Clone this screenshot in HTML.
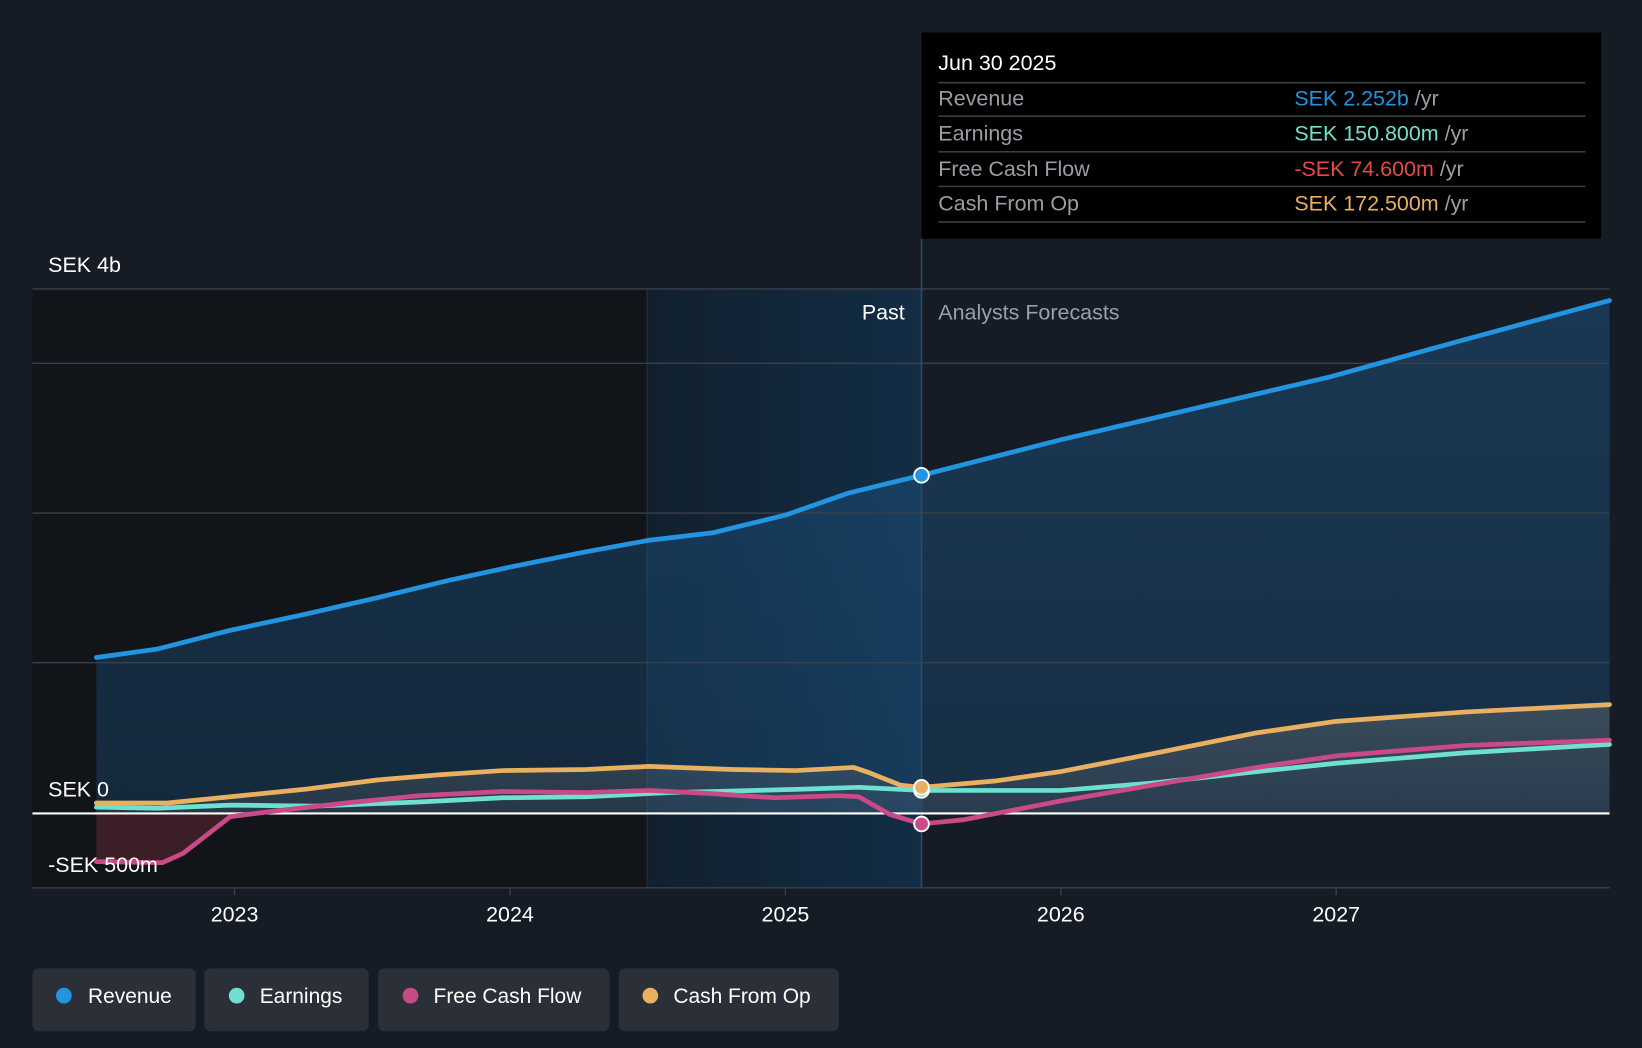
<!DOCTYPE html>
<html><head><meta charset="utf-8"><style>
html,body{margin:0;padding:0;background:#161c25;width:1642px;height:1048px;overflow:hidden}
svg{display:block}
text{font-family:"Liberation Sans",sans-serif}
</style></head><body>
<svg width="1642" height="1048" viewBox="0 0 1568 1001" preserveAspectRatio="none" xmlns="http://www.w3.org/2000/svg">
<defs>
<linearGradient id="hl" x1="0" y1="0" x2="1" y2="0"><stop offset="0" stop-color="#11202e"/><stop offset="1" stop-color="#132d45"/></linearGradient>
<linearGradient id="rev" x1="0" y1="0" x2="0" y2="1"><stop offset="0" stop-color="#1d5a8c" stop-opacity="0.45"/><stop offset="1" stop-color="#1d5a8c" stop-opacity="0.3"/></linearGradient>
<linearGradient id="oth" x1="0" y1="0" x2="0" y2="1"><stop offset="0" stop-color="#8a8a80" stop-opacity="0.3"/><stop offset="1" stop-color="#8a8a90" stop-opacity="0.15"/></linearGradient>
</defs>
<rect width="1568" height="1001" fill="#161c25"/>
<rect x="31" y="276" width="587" height="572" fill="#111419"/>
<rect x="618" y="276" width="262" height="572" fill="url(#hl)"/>
<line x1="618" y1="276" x2="618" y2="848" stroke="#1e3348" stroke-width="1"/>
<path d="M92,628 L150,620 L220,602 L290,587 L360,571 L430,554 L490,541 L560,527 L620,516 L680,509 L750,492 L810,471 L880,454 L1013,420 L1150,388 L1270,360 L1400,324 L1537,287 L1537,777 L92,777 Z" fill="url(#rev)"/>
<path d="M92,767 L160,767 L220,761 L290,754 L360,745 L420,740 L480,736 L560,735 L620,732 L700,735 L760,736 L815,733 L830,738 L860,750 L880,752 L950,746 L1013,737 L1100,720 L1200,700 L1276,689 L1400,680 L1537,673 L1537,777 L92,777 Z" fill="url(#oth)"/>
<path d="M92,777 L92,823 L155,824 L175,815 L220,780 L230,777 Z" fill="#5a2530" opacity="0.6"/>
<g stroke="#3a4049" stroke-width="1.3">
<line x1="31" y1="276" x2="1537" y2="276"/>
<line x1="31" y1="347" x2="1537" y2="347"/>
<line x1="31" y1="490" x2="1537" y2="490"/>
<line x1="31" y1="633" x2="1537" y2="633"/>
<line x1="31" y1="848" x2="1537" y2="848"/>
<line x1="224" y1="848" x2="224" y2="855"/><line x1="487" y1="848" x2="487" y2="855"/><line x1="750" y1="848" x2="750" y2="855"/><line x1="1013" y1="848" x2="1013" y2="855"/><line x1="1276" y1="848" x2="1276" y2="855"/>
</g>
<line x1="880" y1="228" x2="880" y2="848" stroke="#2a4a6a" stroke-width="1.5"/>
<line x1="31" y1="777" x2="1537" y2="777" stroke="#ffffff" stroke-width="2"/>
<g fill="none" stroke-width="4.5" stroke-linejoin="round" stroke-linecap="round">
<polyline stroke="#e8b060" points="92,767 160,767 220,761 290,754 360,745 420,740 480,736 560,735 620,732 700,735 760,736 815,733 830,738 860,750 880,752 950,746 1013,737 1100,720 1200,700 1276,689 1400,680 1537,673"/>
<polyline stroke="#6de0cf" points="92,771 150,772 220,769 300,770 400,766 480,762 560,761 640,757 760,754 820,752 880,755 1013,755 1100,748 1200,737 1276,729 1400,719 1537,711"/>
<polyline stroke="#c94a86" points="92,823 155,824 175,815 220,780 260,775 330,767 400,760 480,756 560,757 620,755 680,758 740,762 800,760 820,761 850,778 880,787 920,783 1013,765 1100,750 1200,733 1276,722 1400,712 1537,707"/>
<polyline stroke="#2394e0" points="92,628 150,620 220,602 290,587 360,571 430,554 490,541 560,527 620,516 680,509 750,492 810,471 880,454 1013,420 1150,388 1270,360 1400,324 1537,287"/>
</g>
<g stroke="#fff" stroke-width="1.8">
<circle cx="880" cy="454" r="7" fill="#2394e0"/>
<circle cx="880" cy="755" r="7" fill="#6de0cf"/>
<circle cx="880" cy="752" r="7" fill="#e8b060"/>
<circle cx="880" cy="787" r="7" fill="#c94a86"/>
</g>
<g font-size="20.5" fill="#fff">
<text x="46" y="260">SEK 4b</text>
<text x="46" y="761">SEK 0</text>
<text x="46" y="833">-SEK 500m</text>
<text x="864" y="305" text-anchor="end">Past</text>
<text x="896" y="305" fill="#9aa0a8">Analysts Forecasts</text>
<text x="224" y="880" text-anchor="middle">2023</text>
<text x="487" y="880" text-anchor="middle">2024</text>
<text x="750" y="880" text-anchor="middle">2025</text>
<text x="1013" y="880" text-anchor="middle">2026</text>
<text x="1276" y="880" text-anchor="middle">2027</text>
</g>
<rect x="880" y="31" width="649" height="197" fill="#000"/>
<g stroke="#3a3d42" stroke-width="1.5">
<line x1="896" y1="79" x2="1514" y2="79"/><line x1="896" y1="111" x2="1514" y2="111"/><line x1="896" y1="145" x2="1514" y2="145"/><line x1="896" y1="178" x2="1514" y2="178"/><line x1="896" y1="212" x2="1514" y2="212"/>
</g>
<g font-size="20.5">
<text x="896" y="67" fill="#fff">Jun 30 2025</text>
<text x="896" y="101" fill="#9a9ea4">Revenue</text>
<text x="896" y="134" fill="#9a9ea4">Earnings</text>
<text x="896" y="168" fill="#9a9ea4">Free Cash Flow</text>
<text x="896" y="201" fill="#9a9ea4">Cash From Op</text>
<text x="1236" y="101"><tspan fill="#2394e0">SEK 2.252b</tspan><tspan fill="#9a9ea4"> /yr</tspan></text>
<text x="1236" y="134"><tspan fill="#6de0cf">SEK 150.800m</tspan><tspan fill="#9a9ea4"> /yr</tspan></text>
<text x="1236" y="168"><tspan fill="#e84848">-SEK 74.600m</tspan><tspan fill="#9a9ea4"> /yr</tspan></text>
<text x="1236" y="201"><tspan fill="#e8b060">SEK 172.500m</tspan><tspan fill="#9a9ea4"> /yr</tspan></text>
</g>
<g>
<rect x="31" y="925" width="156" height="60" rx="6" fill="#2a2f38"/>
<rect x="195" y="925" width="157" height="60" rx="6" fill="#2a2f38"/>
<rect x="361" y="925" width="221" height="60" rx="6" fill="#2a2f38"/>
<rect x="591" y="925" width="210" height="60" rx="6" fill="#2a2f38"/>
<circle cx="61" cy="951" r="7.5" fill="#2394e0"/>
<circle cx="226" cy="951" r="7.5" fill="#6de0cf"/>
<circle cx="392" cy="951" r="7.5" fill="#c94a86"/>
<circle cx="621" cy="951" r="7.5" fill="#e8b060"/>
<g font-size="20" fill="#fff">
<text x="84" y="958">Revenue</text>
<text x="248" y="958">Earnings</text>
<text x="414" y="958">Free Cash Flow</text>
<text x="643" y="958">Cash From Op</text>
</g>
</g>
</svg>
</body></html>
